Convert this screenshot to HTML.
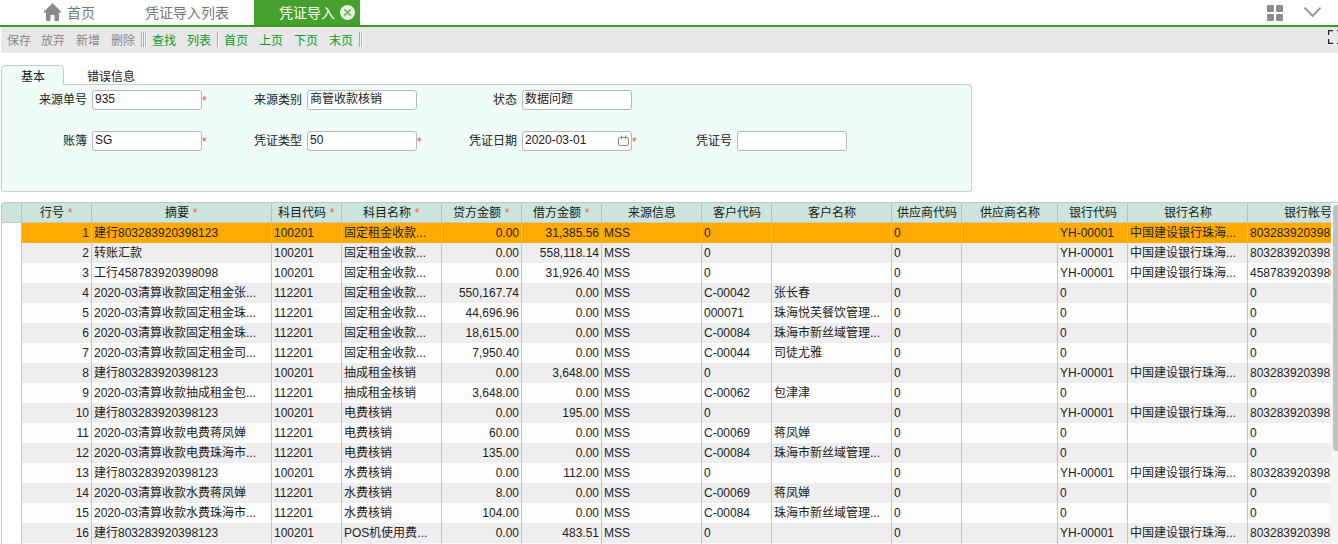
<!DOCTYPE html>
<html lang="zh-CN">
<head>
<meta charset="utf-8">
<title>凭证导入</title>
<style>
*{box-sizing:border-box;margin:0;padding:0}
html,body{width:1338px;height:544px;overflow:hidden;background:#fff}
body{font-family:"Liberation Sans",sans-serif;font-size:12px;color:#222;position:relative}
.abs{position:absolute}
/* top tabs */
#tabs{position:absolute;left:0;top:0;width:1338px;height:25px;background:#fff}
#tabs .t{position:absolute;top:0;height:25px;line-height:26px;font-size:14px;color:#777;white-space:nowrap}
#tabs .act{background:#45a02e;color:#fff;left:254px;width:106px}
#gline{position:absolute;left:0;top:25px;width:1338px;height:2px;background:#3c9d22}
/* toolbar */
#tb{position:absolute;left:1px;top:27px;width:1337px;height:26px;background:#e8e8e8}
#tb span{position:absolute;top:1px;line-height:26px;font-size:12px;white-space:nowrap}
#tb .g{color:#888}
#tb .a{color:#0a9a2a}
#tb .sep{position:absolute;top:5px;height:15px;width:2px;border-left:1px solid #ababab;background:#fff}
/* sub tabs */
#st1{position:absolute;left:1px;top:65px;width:63px;height:20px;border:1px solid #c8c8c8;border-bottom:none;border-radius:5px 5px 0 0;background:#effcf8;text-align:center;line-height:22px;color:#222;z-index:2}
#st2{position:absolute;left:87px;top:66px;height:20px;line-height:22px;color:#222}
#panel{position:absolute;left:1px;top:84px;width:971px;height:108px;border:1px solid #cdcdcd;border-radius:0 3px 3px 3px;background:#effcf8}
.lb{position:absolute;height:20px;line-height:20px;text-align:right;white-space:nowrap;color:#222}
.inp{position:absolute;width:110px;height:20px;border:1px solid #b8b8b8;border-radius:3px;background:#fff;line-height:17px;padding-left:2px;font-size:12px;color:#222;white-space:nowrap}
.rq{position:absolute;color:#f4502e;font-size:12px;line-height:22px}
/* grid */
.grid{position:absolute;left:1px;top:202px;width:1330px;height:342px;overflow:hidden;border-radius:4px 0 0 0}
.ghead{display:flex;height:21px;white-space:nowrap;width:1400px;background:#cbe5dc;border-top:1px solid #c6c6c6;border-bottom:1px solid #c8c8c8}
.hc{flex:none;height:19px;line-height:21px;text-align:center;border-right:1px solid #bdbdbd;color:#1a1a1a;overflow:hidden}
.st{color:#fa5a3c}
.gr{display:flex;height:20px;white-space:nowrap;width:1400px}
.gc{flex:none;height:20px;line-height:20px;border-right:1px solid #c4c4c4;padding:0 2px;overflow:hidden;color:#222}
.gc.r{text-align:right}
.gr.sel .gc{background:#ffaa00}
.gr.ev .gc{background:#eeeeee}
.gr.od .gc{background:#fdfdfd}
.gr .c0{background:#fff !important;border-left:1px solid #c4c4c4}
.hc.c0{border-left:1px solid #c4c4c4}
#vs{position:absolute;left:1331px;top:202px;width:7px;height:342px;background:#f5f5f5;border-top:1px solid #c6c6c6}
#vth{position:absolute;left:1333px;top:205px;width:9px;height:246px;background:#c1c1c1;border-radius:4px}
</style>
</head>
<body>
<div id="tabs">
  <svg class="abs" style="left:43px;top:3px" width="19" height="18" viewBox="0 0 19 18"><path d="M9.5 0 L19 9.5 L16 9.5 L16 17 Q16 18 15 18 L11.5 18 L11.5 12 L7.5 12 L7.5 18 L4 18 Q3 18 3 17 L3 9.5 L0 9.5 Z" fill="#8a8a8a"/></svg>
  <div class="t" style="left:67px">首页</div>
  <div class="t" style="left:145px">凭证导入列表</div>
  <div class="t act"><span style="position:absolute;left:25px">凭证导入</span>
    <svg class="abs" style="left:86px;top:5px" width="15" height="15" viewBox="0 0 15 15"><circle cx="7.5" cy="7.5" r="7.5" fill="#ececec"/><path d="M4.8 4.8 L10.2 10.2 M10.2 4.8 L4.8 10.2" stroke="#6cbf57" stroke-width="1.8" stroke-linecap="round"/></svg>
  </div>
  <svg class="abs" style="left:1267px;top:5px" width="16" height="16" viewBox="0 0 16 16"><rect x="0" y="0" width="7" height="7" rx="1" fill="#8c8c8c"/><rect x="9" y="0" width="7" height="7" rx="1" fill="#8c8c8c"/><rect x="0" y="9" width="7" height="7" rx="1" fill="#8c8c8c"/><rect x="9" y="9" width="7" height="7" rx="1" fill="#8c8c8c"/></svg>
  <svg class="abs" style="left:1303px;top:6px" width="20" height="12" viewBox="0 0 20 12"><path d="M1.6 1.6 L9.6 10 L17.6 1.6" fill="none" stroke="#999" stroke-width="2"/></svg>
</div>
<div id="gline"></div>
<div id="tb">
  <span class="g" style="left:6px">保存</span>
  <span class="g" style="left:40px">放弃</span>
  <span class="g" style="left:75px">新增</span>
  <span class="g" style="left:110px">删除</span>
  <div class="sep" style="left:140px"></div><div class="sep" style="left:142px"></div><div class="sep" style="left:144px"></div>
  <span class="a" style="left:151px">查找</span>
  <span class="a" style="left:186px">列表</span>
  <div class="sep" style="left:216px"></div>
  <span class="a" style="left:223px">首页</span>
  <span class="a" style="left:258px">上页</span>
  <span class="a" style="left:293px">下页</span>
  <span class="a" style="left:328px">末页</span>
  <div class="sep" style="left:358px"></div><div class="sep" style="left:360px"></div>
  <svg class="abs" style="left:1327px;top:3px" width="11" height="14" viewBox="0 0 11 14"><path d="M5 0.6 H0.6 V5 M0.6 9 V13.4 H5 M9 0.6 H11 M9 13.4 H11" fill="none" stroke="#222" stroke-width="1.2"/></svg>
</div>
<div id="st1">基本</div>
<div id="st2">错误信息</div>
<div id="panel"></div>
<!-- row 1 -->
<div class="lb" style="left:20px;width:67px;top:90px">来源单号</div><div class="inp" style="left:92px;top:90px">935</div><div class="rq" style="left:202px;top:90px">*</div>
<div class="lb" style="left:235px;width:67px;top:90px">来源类别</div><div class="inp" style="left:307px;top:90px">商管收款核销</div>
<div class="lb" style="left:450px;width:67px;top:90px">状态</div><div class="inp" style="left:522px;top:90px">数据问题</div>
<!-- row 2 -->
<div class="lb" style="left:20px;width:67px;top:131px">账簿</div><div class="inp" style="left:92px;top:131px">SG</div><div class="rq" style="left:202px;top:131px">*</div>
<div class="lb" style="left:235px;width:67px;top:131px">凭证类型</div><div class="inp" style="left:307px;top:131px">50</div><div class="rq" style="left:417px;top:131px">*</div>
<div class="lb" style="left:450px;width:67px;top:131px">凭证日期</div><div class="inp" style="left:522px;top:131px">2020-03-01
  <svg class="abs" style="left:95px;top:3px" width="11" height="12" viewBox="0 0 11 12"><path d="M2 2.5 h7 a1.5 1.5 0 0 1 1.5 1.5 v5 a1.5 1.5 0 0 1 -1.5 1.5 h-7 a1.5 1.5 0 0 1 -1.5 -1.5 v-5 a1.5 1.5 0 0 1 1.5 -1.5 z M3.5 0.5 v4 M7.5 0.5 v4" fill="none" stroke="#8c8c8c" stroke-width="1"/></svg>
</div><div class="rq" style="left:632px;top:131px">*</div>
<div class="lb" style="left:665px;width:67px;top:131px">凭证号</div><div class="inp" style="left:737px;top:131px"></div>
<div class="grid">
<div class="ghead">
<div class="hc c0" style="width:21px"></div>
<div class="hc c1" style="width:70px">行号 <span class="st">*</span></div>
<div class="hc c2" style="width:180px">摘要 <span class="st">*</span></div>
<div class="hc c3" style="width:70px">科目代码 <span class="st">*</span></div>
<div class="hc c4" style="width:100px">科目名称 <span class="st">*</span></div>
<div class="hc c5" style="width:80px">贷方金额 <span class="st">*</span></div>
<div class="hc c6" style="width:80px">借方金额 <span class="st">*</span></div>
<div class="hc c7" style="width:100px">来源信息</div>
<div class="hc c8" style="width:70px">客户代码</div>
<div class="hc c9" style="width:120px">客户名称</div>
<div class="hc c10" style="width:70px">供应商代码</div>
<div class="hc c11" style="width:96px">供应商名称</div>
<div class="hc c12" style="width:70px">银行代码</div>
<div class="hc c13" style="width:120px">银行名称</div>
<div class="hc c14" style="width:120px">银行帐号</div>
</div>
<div class="gr sel">
<div class="gc c0" style="width:21px"></div>
<div class="gc r" style="width:70px">1</div>
<div class="gc l" style="width:180px">建行803283920398123</div>
<div class="gc l" style="width:70px">100201</div>
<div class="gc l" style="width:100px">固定租金收款...</div>
<div class="gc r" style="width:80px">0.00</div>
<div class="gc r" style="width:80px">31,385.56</div>
<div class="gc l" style="width:100px">MSS</div>
<div class="gc l" style="width:70px">0</div>
<div class="gc l" style="width:120px"></div>
<div class="gc l" style="width:70px">0</div>
<div class="gc l" style="width:96px"></div>
<div class="gc l" style="width:70px">YH-00001</div>
<div class="gc l" style="width:120px">中国建设银行珠海...</div>
<div class="gc l" style="width:120px">803283920398123</div>
</div>
<div class="gr ev">
<div class="gc c0" style="width:21px"></div>
<div class="gc r" style="width:70px">2</div>
<div class="gc l" style="width:180px">转账汇款</div>
<div class="gc l" style="width:70px">100201</div>
<div class="gc l" style="width:100px">固定租金收款...</div>
<div class="gc r" style="width:80px">0.00</div>
<div class="gc r" style="width:80px">558,118.14</div>
<div class="gc l" style="width:100px">MSS</div>
<div class="gc l" style="width:70px">0</div>
<div class="gc l" style="width:120px"></div>
<div class="gc l" style="width:70px">0</div>
<div class="gc l" style="width:96px"></div>
<div class="gc l" style="width:70px">YH-00001</div>
<div class="gc l" style="width:120px">中国建设银行珠海...</div>
<div class="gc l" style="width:120px">803283920398123</div>
</div>
<div class="gr od">
<div class="gc c0" style="width:21px"></div>
<div class="gc r" style="width:70px">3</div>
<div class="gc l" style="width:180px">工行458783920398098</div>
<div class="gc l" style="width:70px">100201</div>
<div class="gc l" style="width:100px">固定租金收款...</div>
<div class="gc r" style="width:80px">0.00</div>
<div class="gc r" style="width:80px">31,926.40</div>
<div class="gc l" style="width:100px">MSS</div>
<div class="gc l" style="width:70px">0</div>
<div class="gc l" style="width:120px"></div>
<div class="gc l" style="width:70px">0</div>
<div class="gc l" style="width:96px"></div>
<div class="gc l" style="width:70px">YH-00001</div>
<div class="gc l" style="width:120px">中国建设银行珠海...</div>
<div class="gc l" style="width:120px">458783920398098</div>
</div>
<div class="gr ev">
<div class="gc c0" style="width:21px"></div>
<div class="gc r" style="width:70px">4</div>
<div class="gc l" style="width:180px">2020-03清算收款固定租金张...</div>
<div class="gc l" style="width:70px">112201</div>
<div class="gc l" style="width:100px">固定租金收款...</div>
<div class="gc r" style="width:80px">550,167.74</div>
<div class="gc r" style="width:80px">0.00</div>
<div class="gc l" style="width:100px">MSS</div>
<div class="gc l" style="width:70px">C-00042</div>
<div class="gc l" style="width:120px">张长春</div>
<div class="gc l" style="width:70px">0</div>
<div class="gc l" style="width:96px"></div>
<div class="gc l" style="width:70px">0</div>
<div class="gc l" style="width:120px"></div>
<div class="gc l" style="width:120px">0</div>
</div>
<div class="gr od">
<div class="gc c0" style="width:21px"></div>
<div class="gc r" style="width:70px">5</div>
<div class="gc l" style="width:180px">2020-03清算收款固定租金珠...</div>
<div class="gc l" style="width:70px">112201</div>
<div class="gc l" style="width:100px">固定租金收款...</div>
<div class="gc r" style="width:80px">44,696.96</div>
<div class="gc r" style="width:80px">0.00</div>
<div class="gc l" style="width:100px">MSS</div>
<div class="gc l" style="width:70px">000071</div>
<div class="gc l" style="width:120px">珠海悦芙餐饮管理...</div>
<div class="gc l" style="width:70px">0</div>
<div class="gc l" style="width:96px"></div>
<div class="gc l" style="width:70px">0</div>
<div class="gc l" style="width:120px"></div>
<div class="gc l" style="width:120px">0</div>
</div>
<div class="gr ev">
<div class="gc c0" style="width:21px"></div>
<div class="gc r" style="width:70px">6</div>
<div class="gc l" style="width:180px">2020-03清算收款固定租金珠...</div>
<div class="gc l" style="width:70px">112201</div>
<div class="gc l" style="width:100px">固定租金收款...</div>
<div class="gc r" style="width:80px">18,615.00</div>
<div class="gc r" style="width:80px">0.00</div>
<div class="gc l" style="width:100px">MSS</div>
<div class="gc l" style="width:70px">C-00084</div>
<div class="gc l" style="width:120px">珠海市新丝域管理...</div>
<div class="gc l" style="width:70px">0</div>
<div class="gc l" style="width:96px"></div>
<div class="gc l" style="width:70px">0</div>
<div class="gc l" style="width:120px"></div>
<div class="gc l" style="width:120px">0</div>
</div>
<div class="gr od">
<div class="gc c0" style="width:21px"></div>
<div class="gc r" style="width:70px">7</div>
<div class="gc l" style="width:180px">2020-03清算收款固定租金司...</div>
<div class="gc l" style="width:70px">112201</div>
<div class="gc l" style="width:100px">固定租金收款...</div>
<div class="gc r" style="width:80px">7,950.40</div>
<div class="gc r" style="width:80px">0.00</div>
<div class="gc l" style="width:100px">MSS</div>
<div class="gc l" style="width:70px">C-00044</div>
<div class="gc l" style="width:120px">司徒尤雅</div>
<div class="gc l" style="width:70px">0</div>
<div class="gc l" style="width:96px"></div>
<div class="gc l" style="width:70px">0</div>
<div class="gc l" style="width:120px"></div>
<div class="gc l" style="width:120px">0</div>
</div>
<div class="gr ev">
<div class="gc c0" style="width:21px"></div>
<div class="gc r" style="width:70px">8</div>
<div class="gc l" style="width:180px">建行803283920398123</div>
<div class="gc l" style="width:70px">100201</div>
<div class="gc l" style="width:100px">抽成租金核销</div>
<div class="gc r" style="width:80px">0.00</div>
<div class="gc r" style="width:80px">3,648.00</div>
<div class="gc l" style="width:100px">MSS</div>
<div class="gc l" style="width:70px">0</div>
<div class="gc l" style="width:120px"></div>
<div class="gc l" style="width:70px">0</div>
<div class="gc l" style="width:96px"></div>
<div class="gc l" style="width:70px">YH-00001</div>
<div class="gc l" style="width:120px">中国建设银行珠海...</div>
<div class="gc l" style="width:120px">803283920398123</div>
</div>
<div class="gr od">
<div class="gc c0" style="width:21px"></div>
<div class="gc r" style="width:70px">9</div>
<div class="gc l" style="width:180px">2020-03清算收款抽成租金包...</div>
<div class="gc l" style="width:70px">112201</div>
<div class="gc l" style="width:100px">抽成租金核销</div>
<div class="gc r" style="width:80px">3,648.00</div>
<div class="gc r" style="width:80px">0.00</div>
<div class="gc l" style="width:100px">MSS</div>
<div class="gc l" style="width:70px">C-00062</div>
<div class="gc l" style="width:120px">包津津</div>
<div class="gc l" style="width:70px">0</div>
<div class="gc l" style="width:96px"></div>
<div class="gc l" style="width:70px">0</div>
<div class="gc l" style="width:120px"></div>
<div class="gc l" style="width:120px">0</div>
</div>
<div class="gr ev">
<div class="gc c0" style="width:21px"></div>
<div class="gc r" style="width:70px">10</div>
<div class="gc l" style="width:180px">建行803283920398123</div>
<div class="gc l" style="width:70px">100201</div>
<div class="gc l" style="width:100px">电费核销</div>
<div class="gc r" style="width:80px">0.00</div>
<div class="gc r" style="width:80px">195.00</div>
<div class="gc l" style="width:100px">MSS</div>
<div class="gc l" style="width:70px">0</div>
<div class="gc l" style="width:120px"></div>
<div class="gc l" style="width:70px">0</div>
<div class="gc l" style="width:96px"></div>
<div class="gc l" style="width:70px">YH-00001</div>
<div class="gc l" style="width:120px">中国建设银行珠海...</div>
<div class="gc l" style="width:120px">803283920398123</div>
</div>
<div class="gr od">
<div class="gc c0" style="width:21px"></div>
<div class="gc r" style="width:70px">11</div>
<div class="gc l" style="width:180px">2020-03清算收款电费蒋凤婵</div>
<div class="gc l" style="width:70px">112201</div>
<div class="gc l" style="width:100px">电费核销</div>
<div class="gc r" style="width:80px">60.00</div>
<div class="gc r" style="width:80px">0.00</div>
<div class="gc l" style="width:100px">MSS</div>
<div class="gc l" style="width:70px">C-00069</div>
<div class="gc l" style="width:120px">蒋凤婵</div>
<div class="gc l" style="width:70px">0</div>
<div class="gc l" style="width:96px"></div>
<div class="gc l" style="width:70px">0</div>
<div class="gc l" style="width:120px"></div>
<div class="gc l" style="width:120px">0</div>
</div>
<div class="gr ev">
<div class="gc c0" style="width:21px"></div>
<div class="gc r" style="width:70px">12</div>
<div class="gc l" style="width:180px">2020-03清算收款电费珠海市...</div>
<div class="gc l" style="width:70px">112201</div>
<div class="gc l" style="width:100px">电费核销</div>
<div class="gc r" style="width:80px">135.00</div>
<div class="gc r" style="width:80px">0.00</div>
<div class="gc l" style="width:100px">MSS</div>
<div class="gc l" style="width:70px">C-00084</div>
<div class="gc l" style="width:120px">珠海市新丝域管理...</div>
<div class="gc l" style="width:70px">0</div>
<div class="gc l" style="width:96px"></div>
<div class="gc l" style="width:70px">0</div>
<div class="gc l" style="width:120px"></div>
<div class="gc l" style="width:120px">0</div>
</div>
<div class="gr od">
<div class="gc c0" style="width:21px"></div>
<div class="gc r" style="width:70px">13</div>
<div class="gc l" style="width:180px">建行803283920398123</div>
<div class="gc l" style="width:70px">100201</div>
<div class="gc l" style="width:100px">水费核销</div>
<div class="gc r" style="width:80px">0.00</div>
<div class="gc r" style="width:80px">112.00</div>
<div class="gc l" style="width:100px">MSS</div>
<div class="gc l" style="width:70px">0</div>
<div class="gc l" style="width:120px"></div>
<div class="gc l" style="width:70px">0</div>
<div class="gc l" style="width:96px"></div>
<div class="gc l" style="width:70px">YH-00001</div>
<div class="gc l" style="width:120px">中国建设银行珠海...</div>
<div class="gc l" style="width:120px">803283920398123</div>
</div>
<div class="gr ev">
<div class="gc c0" style="width:21px"></div>
<div class="gc r" style="width:70px">14</div>
<div class="gc l" style="width:180px">2020-03清算收款水费蒋凤婵</div>
<div class="gc l" style="width:70px">112201</div>
<div class="gc l" style="width:100px">水费核销</div>
<div class="gc r" style="width:80px">8.00</div>
<div class="gc r" style="width:80px">0.00</div>
<div class="gc l" style="width:100px">MSS</div>
<div class="gc l" style="width:70px">C-00069</div>
<div class="gc l" style="width:120px">蒋凤婵</div>
<div class="gc l" style="width:70px">0</div>
<div class="gc l" style="width:96px"></div>
<div class="gc l" style="width:70px">0</div>
<div class="gc l" style="width:120px"></div>
<div class="gc l" style="width:120px">0</div>
</div>
<div class="gr od">
<div class="gc c0" style="width:21px"></div>
<div class="gc r" style="width:70px">15</div>
<div class="gc l" style="width:180px">2020-03清算收款水费珠海市...</div>
<div class="gc l" style="width:70px">112201</div>
<div class="gc l" style="width:100px">水费核销</div>
<div class="gc r" style="width:80px">104.00</div>
<div class="gc r" style="width:80px">0.00</div>
<div class="gc l" style="width:100px">MSS</div>
<div class="gc l" style="width:70px">C-00084</div>
<div class="gc l" style="width:120px">珠海市新丝域管理...</div>
<div class="gc l" style="width:70px">0</div>
<div class="gc l" style="width:96px"></div>
<div class="gc l" style="width:70px">0</div>
<div class="gc l" style="width:120px"></div>
<div class="gc l" style="width:120px">0</div>
</div>
<div class="gr ev">
<div class="gc c0" style="width:21px"></div>
<div class="gc r" style="width:70px">16</div>
<div class="gc l" style="width:180px">建行803283920398123</div>
<div class="gc l" style="width:70px">100201</div>
<div class="gc l" style="width:100px">POS机使用费...</div>
<div class="gc r" style="width:80px">0.00</div>
<div class="gc r" style="width:80px">483.51</div>
<div class="gc l" style="width:100px">MSS</div>
<div class="gc l" style="width:70px">0</div>
<div class="gc l" style="width:120px"></div>
<div class="gc l" style="width:70px">0</div>
<div class="gc l" style="width:96px"></div>
<div class="gc l" style="width:70px">YH-00001</div>
<div class="gc l" style="width:120px">中国建设银行珠海...</div>
<div class="gc l" style="width:120px">803283920398123</div>
</div>
<div class="gr od">
<div class="gc c0" style="width:21px"></div>
<div class="gc r" style="width:70px">17</div>
<div class="gc l" style="width:180px">2020-03清算收款POS机使用...</div>
<div class="gc l" style="width:70px">112201</div>
<div class="gc l" style="width:100px">POS机使用费...</div>
<div class="gc r" style="width:80px">483.51</div>
<div class="gc r" style="width:80px">0.00</div>
<div class="gc l" style="width:100px">MSS</div>
<div class="gc l" style="width:70px">C-00084</div>
<div class="gc l" style="width:120px">珠海市新丝域管理...</div>
<div class="gc l" style="width:70px">0</div>
<div class="gc l" style="width:96px"></div>
<div class="gc l" style="width:70px">0</div>
<div class="gc l" style="width:120px"></div>
<div class="gc l" style="width:120px">0</div>
</div>
</div>
<div id="vs"></div><div id="vth"></div>
</body>
</html>
